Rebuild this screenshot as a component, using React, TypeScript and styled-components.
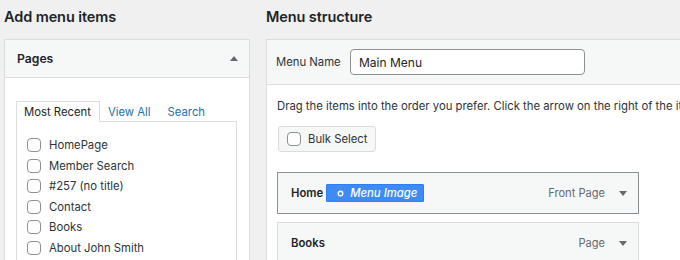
import React from 'react';
import styled, { createGlobalStyle } from 'styled-components';

const GlobalStyle = createGlobalStyle`
  html, body {
    margin: 0;
    padding: 0;
    background: #f0f0f1;
    overflow: hidden;
  }
  body {
    font-family: Inter, "Liberation Sans", Arial, sans-serif;
    color: #1d2327;
  }
`;

const Page = styled.div`
  display: flex;
  align-items: flex-start;
  gap: 16px;
  padding-left: 4px;
  width: 900px;
  height: 260px;
  overflow: hidden;
`;

const Column = styled.div<{ width: number }>`
  display: flex;
  flex-direction: column;
  flex: 0 0 ${p => p.width}px;
`;

const Heading = styled.h2`
  margin: 0;
  flex: 0 0 39px;
  height: 39px;
  display: flex;
  align-items: center;
  padding-bottom: 6px;
  box-sizing: border-box;
  font-size: 14.5px;
  font-weight: 600;
  color: #1d2327;
  letter-spacing: -0.1px;
`;

const Panel = styled.div<{ openRight?: boolean }>`
  height: 240px;
  background: #fff;
  border: 1px solid #dcdcde;
  border-right-width: ${p => (p.openRight ? 0 : 1)}px;
  border-bottom: none;
  display: flex;
  flex-direction: column;
`;

const PanelHeader = styled.div<{ height: number }>`
  flex: 0 0 ${p => p.height}px;
  box-sizing: border-box;
  background: #f6f7f7;
  border-bottom: 1px solid #dcdcde;
  display: flex;
  align-items: center;
`;

const PagesTitle = styled.span`
  flex: 1;
  padding-left: 12px;
  font-size: 12.2px;
  font-weight: 600;
`;

const Caret = styled.span<{ up?: boolean }>`
  width: 0;
  height: 0;
  border-left: 4px solid transparent;
  border-right: 4px solid transparent;
  ${p => (p.up ? 'border-bottom' : 'border-top')}: 5px solid #646970;
`;

const CaretSlot = styled.span`
  display: flex;
  margin-right: 11px;
`;

const PanelBody = styled.div`
  padding: 21px 12px 0 11px;
`;

const Tabs = styled.div`
  display: flex;
  align-items: flex-end;
  height: 22px;
`;

const Tab = styled.span<{ active?: boolean }>`
  height: 21px;
  box-sizing: border-box;
  display: flex;
  align-items: center;
  padding: 0 8px 1px 7px;
  font-size: 11.3px;
  color: ${p => (p.active ? '#1d2327' : '#2271b1')};
  background: ${p => (p.active ? '#fff' : 'transparent')};
  border: 1px solid ${p => (p.active ? '#dcdcde' : 'transparent')};
  border-bottom: none;
  margin-bottom: -1px;
  position: relative;
`;

const TabContent = styled.div`
  border: 1px solid #dcdcde;
  border-bottom: none;
  height: 160px;
  padding: 16px 0 0 10px;
  display: flex;
  flex-direction: column;
  gap: 6.6px;
`;

const CheckRow = styled.label`
  display: flex;
  align-items: center;
  gap: 8px;
  font-size: 11.3px;
  color: #2c3338;
  height: 14px;
`;

const Box = styled.span`
  width: 12px;
  height: 12px;
  border: 1px solid #8c8f94;
  border-radius: 4px;
  background: #fff;
  flex: 0 0 auto;
`;

const NameLabel = styled.span`
  padding-left: 9px;
  font-size: 11.3px;
  color: #2c3338;
  width: 74px;
`;

const NameInput = styled.div`
  width: 235px;
  height: 26px;
  box-sizing: border-box;
  border: 1px solid #8c8f94;
  border-radius: 4px;
  background: #fff;
  display: flex;
  align-items: center;
  padding-left: 8px;
  font-size: 12px;
  color: #1d2327;
`;

const StructureBody = styled.div`
  padding: 13px 0 0 10px;
  display: flex;
  flex-direction: column;
`;

const Hint = styled.p`
  margin: 0;
  font-size: 11.3px;
  color: #2c3338;
  white-space: nowrap;
  line-height: 16px;
`;

const BulkButton = styled.div`
  margin-top: 12px;
  margin-left: 1px;
  width: 98px;
  height: 26px;
  box-sizing: border-box;
  background: #f6f7f7;
  border: 1px solid #dcdcde;
  border-radius: 3px;
  display: flex;
  align-items: center;
  gap: 7px;
  padding-left: 8px;
  font-size: 11.3px;
  color: #2c3338;
  white-space: nowrap;
`;

const MenuList = styled.div`
  margin-top: 20px;
  display: flex;
  flex-direction: column;
  gap: 8px;
`;

const MenuItem = styled.div<{ focused?: boolean }>`
  width: 362px;
  height: 42px;
  box-sizing: border-box;
  background: #f6f7f7;
  border: 1px solid ${p => (p.focused ? '#8c8f94' : '#dcdcde')};
  display: flex;
  align-items: center;
  padding: 0 11px 0 13px;
`;

const ItemTitle = styled.span`
  font-size: 11.3px;
  font-weight: 600;
  color: #1d2327;
`;

const Badge = styled.span`
  margin-left: 3px;
  height: 16px;
  padding: 0 6px 0 10px;
  background: #3d8bf3;
  border: 1px solid #2f7ef0;
  border-radius: 1px;
  color: #fff;
  font-size: 11.3px;
  font-weight: 500;
  font-style: italic;
  display: flex;
  align-items: center;
  gap: 6px;
`;

const ItemType = styled.span`
  margin-left: auto;
  margin-right: 14px;
  font-size: 11.1px;
  color: #646970;
`;

const GearIcon = () => (
  <svg width="7" height="7" viewBox="0 0 8 8">
    <circle cx="4" cy="4" r="2.6" fill="none" stroke="#fff" strokeWidth="1.6" />
  </svg>
);

const pages = ['HomePage', 'Member Search', '#257 (no title)', 'Contact', 'Books', 'About John Smith'];

const items = [
  { title: 'Home', type: 'Front Page', badge: true },
  { title: 'Books', type: 'Page', badge: false },
];

export default function App() {
  return (
    <>
      <GlobalStyle />
      <Page>
        <Column width={246}>
          <Heading>Add menu items</Heading>
          <Panel>
            <PanelHeader height={38}>
              <PagesTitle>Pages</PagesTitle>
              <CaretSlot>
                <Caret up />
              </CaretSlot>
            </PanelHeader>
            <PanelBody>
              <Tabs>
                <Tab active>Most Recent</Tab>
                <Tab>View All</Tab>
                <Tab>Search</Tab>
              </Tabs>
              <TabContent>
                {pages.map(p => (
                  <CheckRow key={p}>
                    <Box />
                    {p}
                  </CheckRow>
                ))}
              </TabContent>
            </PanelBody>
          </Panel>
        </Column>
        <Column width={460}>
          <Heading>Menu structure</Heading>
          <Panel openRight>
            <PanelHeader height={45}>
              <NameLabel>Menu Name</NameLabel>
              <NameInput>Main Menu</NameInput>
            </PanelHeader>
            <StructureBody>
              <Hint>Drag the items into the order you prefer. Click the arrow on the right of the item to reveal additional configuration options.</Hint>
              <BulkButton>
                <Box />
                Bulk Select
              </BulkButton>
              <MenuList>
                {items.map(it => (
                  <MenuItem key={it.title} focused={it.badge}>
                    <ItemTitle>{it.title}</ItemTitle>
                    {it.badge && (
                      <Badge>
                        <GearIcon />
                        Menu Image
                      </Badge>
                    )}
                    <ItemType>{it.type}</ItemType>
                    <Caret />
                  </MenuItem>
                ))}
              </MenuList>
            </StructureBody>
          </Panel>
        </Column>
      </Page>
    </>
  );
}
